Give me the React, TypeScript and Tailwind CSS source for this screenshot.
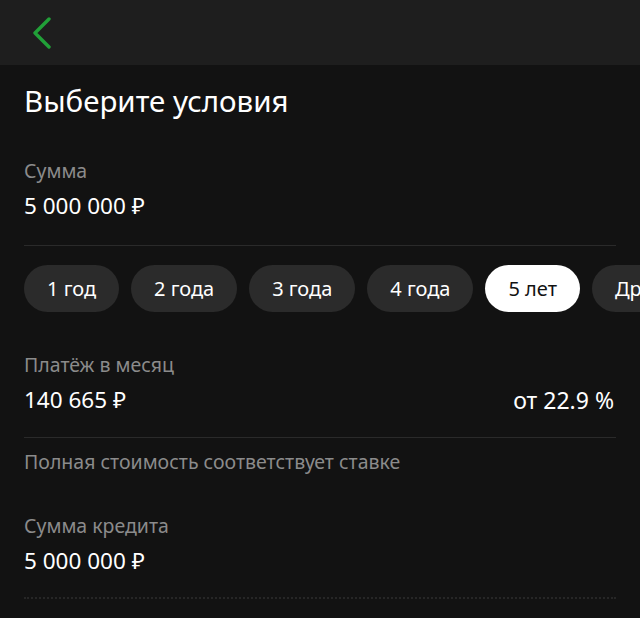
const TERMS = ['1 год', '2 года', '3 года', '4 года', '5 лет', 'Другой']

export default function App() {
  return (
    <div className="w-[640px] h-[618px] overflow-hidden bg-[#121212] text-white font-['Noto_Sans',sans-serif]">
      {/* Header */}
      <div className="h-[65px] bg-[#1e1e1e] flex items-center pl-[32px]">
        <svg width="20" height="32" viewBox="0 0 20 32" fill="none">
          <path d="M17 2 L3 16 L17 30" stroke="#21a038" strokeWidth="3.4" strokeLinecap="round" strokeLinejoin="round" />
        </svg>
      </div>

      <div className="px-6">
        <h1 className="mt-[18px] text-[29.5px] leading-[36px] font-normal">Выберите условия</h1>

        <Field label="Сумма" value="5 000 000 ₽" className="mt-[39px]" />
        <div className="mt-[25px] h-px bg-[#2a2a2a]" />

        {/* Term pills */}
        <div className="mt-[19px] flex gap-3 -mr-6 overflow-hidden">
          {TERMS.map((t) => (
            <div
              key={t}
              className={`h-[47px] px-[23px] flex-shrink-0 rounded-full flex items-center text-[20px] ${
                t === '5 лет' ? 'bg-white text-[#121212]' : 'bg-[#2b2b2b] text-white'
              }`}
            >
              {t}
            </div>
          ))}
        </div>

        <div className="mt-[40px] flex items-end justify-between">
          <Field label="Платёж в месяц" value="140 665 ₽" />
          <div className="text-[23px] leading-[28px] mr-[2px]">от 22.9 %</div>
        </div>
        <div className="mt-[23px] h-px bg-[#2a2a2a]" />

        <div className="mt-[11px] text-[19.5px] leading-[26px] text-[#8b8b8b]">Полная стоимость соответствует ставке</div>

        <Field label="Сумма кредита" value="5 000 000 ₽" className="mt-[38px]" />
        <div className="mt-[22px] border-t-2 border-dotted border-[#262626]" />
      </div>
    </div>
  )
}

function Field({ label, value, className = '' }: { label: string; value: string; className?: string }) {
  return (
    <div className={className}>
      <div className="text-[19.5px] leading-[26px] text-[#8b8b8b]">{label}</div>
      <div className="mt-[8px] text-[22.5px] leading-[28px]">{value}</div>
    </div>
  )
}
